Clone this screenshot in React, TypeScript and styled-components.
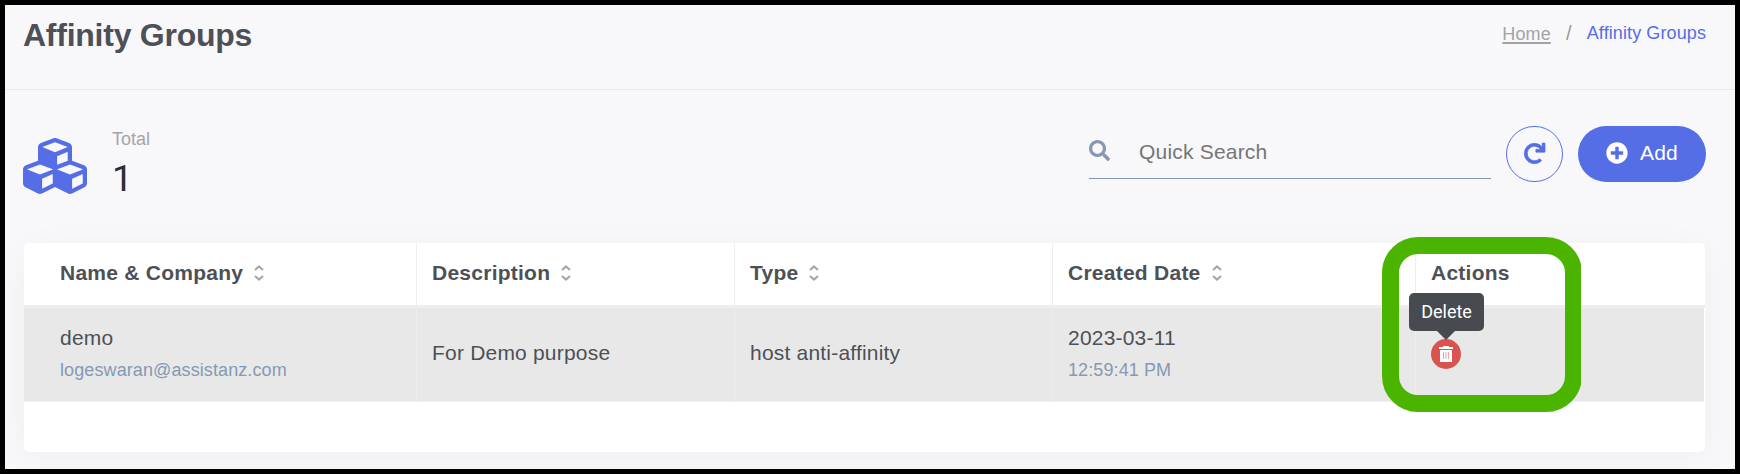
import React from "react";
import styled, { createGlobalStyle } from "styled-components";
import { FaCubes, FaSearch, FaRedo, FaPlusCircle } from "react-icons/fa";

const Global = createGlobalStyle`
  * { box-sizing: border-box; }
  body { margin: 0; font-family: "Liberation Sans", Arial, sans-serif; color: #4d5056; }
`;

const Frame = styled.div`
  height: 474px;
  border: 5px solid #000;
  background: #f8f8fb;
  overflow: hidden;
  position: relative;
`;

const Header = styled.header`
  height: 85px;
  padding: 12px 29px 0 18px;
  border-bottom: 1px solid #e9e9eb;
  display: flex;
  justify-content: space-between;
  align-items: flex-start;
`;

const Title = styled.h1`
  margin: 0;
  font-size: 32px;
  line-height: 37px;
  font-weight: 700;
  letter-spacing: -0.25px;
`;

const Breadcrumb = styled.nav`
  display: flex;
  font-size: 18px;
  line-height: 22px;
  padding-top: 5px;
  color: #999;
  letter-spacing: 0.1px;
`;

const HomeLink = styled.a`
  color: #a3a3a3;
  text-decoration: underline;
  text-underline-offset: 2px;
  text-decoration-thickness: 2px;
  padding-top: 1px;
`;

const Separator = styled.span`
  width: 36px;
  font-size: 20px;
  text-align: center;
`;

const Current = styled.span`
  color: #556ee6;
`;

const Toolbar = styled.section`
  height: 153px;
  padding: 36px 29px 0 18px;
  display: flex;
  align-items: flex-start;
`;

const Summary = styled.div`
  display: flex;
  flex: 1;
`;

const CubesIcon = styled(FaCubes)`
  width: 64px;
  height: 64px;
  margin-top: 8px;
  color: #556ee6;
`;

const Stat = styled.div`
  margin-left: 25px;
  padding-top: 3px;
`;

const StatLabel = styled.div`
  font-size: 18px;
  line-height: 20px;
  color: #a5a5a5;
`;

const StatValue = styled.div`
  font: 37px/40px Roboto, sans-serif;
  margin-top: 10px;
  color: #2a2e35;
`;

const Search = styled.label`
  width: 402px;
  height: 53px;
  border-bottom: 1px solid #8098b2;
  display: flex;
  align-items: flex-start;
  color: #8898b0;
`;

const SearchIcon = styled(FaSearch)`
  width: 21px;
  height: 21px;
  margin-top: 14px;
`;

const SearchInput = styled.input`
  margin: 12px 0 0 29px;
  padding: 0;
  border: 0;
  outline: 0;
  background: transparent;
  font: 21px/28px "Liberation Sans", Arial, sans-serif;
  letter-spacing: 0.2px;
  height: 28px;
  width: 300px;
  &::placeholder { color: #757575; opacity: 1; }
`;

const RoundButton = styled.button`
  width: 57px;
  height: 56px;
  margin-left: 15px;
  padding: 0 0 2px;
  border: 1px solid #556ee6;
  border-radius: 28px;
  background: transparent;
  color: #556ee6;
  display: flex;
  align-items: center;
  justify-content: center;
`;

const RefreshIcon = styled(FaRedo)`
  width: 21px;
  height: 21px;
  overflow: visible;
  stroke: currentColor;
  stroke-width: 16;
`;

const AddButton = styled.button`
  width: 128px;
  height: 56px;
  margin-left: 15px;
  padding: 0 0 2px;
  border: 0;
  border-radius: 28px;
  background: #556ee6;
  color: #fff;
  font: 21px "Liberation Sans", Arial, sans-serif;
  letter-spacing: 0.2px;
  display: flex;
  align-items: center;
  justify-content: center;
  gap: 12px;
`;

const Card = styled.section`
  width: 1681px;
  height: 209px;
  margin-left: 19px;
  background: #fff;
  border-radius: 5px;
  overflow: hidden;
  box-shadow: 0 6px 36px rgba(0, 0, 0, 0.04);
`;

const Row = styled.div<{ $head?: boolean }>`
  display: grid;
  grid-template-columns: 393px 318px 318px 363px 1fr;
  height: ${(p) => (p.$head ? 65 : 94)}px;
  margin-right: ${(p) => (p.$head ? 0 : 1)}px;
  border-bottom: ${(p) => (p.$head ? 3 : 1)}px solid #eee;
  background: ${(p) => (p.$head ? "#fff" : "#e8e8e8")};
  font-size: 21px;
  font-weight: ${(p) => (p.$head ? 700 : 400)};
  letter-spacing: ${(p) => (p.$head ? 0.25 : 0.2)}px;
`;

const Cell = styled.div`
  display: flex;
  flex-direction: column;
  justify-content: center;
  align-items: flex-start;
  padding: 0 0 3px 15px;
  border-right: 1px solid #eee;
  line-height: 28px;
  &:first-child { padding-left: 36px; }
  &:last-child { border-right: 0; }
`;

const HeadLabel = styled.div`
  display: flex;
  align-items: center;
  gap: 11px;
`;

const SubText = styled.div`
  font-size: 18px;
  line-height: 24px;
  margin-top: 6px;
  color: #8699b3;
  letter-spacing: 0.1px;
`;

const SortIcon = () => (
  <svg width="10" height="16" viewBox="0 0 10 16" fill="none" stroke="#a5a5a5" strokeWidth="2">
    <path d="M1 5 5 1.4 9 5M1 11 5 14.6 9 11" />
  </svg>
);

const DeleteButton = styled.button`
  position: relative;
  width: 30px;
  height: 30px;
  padding: 0;
  margin-top: 2px;
  border: 0;
  border-radius: 50%;
  background: #d9534f;
  display: flex;
  align-items: center;
  justify-content: center;
`;

const Tooltip = styled.span`
  position: absolute;
  left: -22px;
  bottom: 38px;
  width: 75px;
  height: 38px;
  border-radius: 5px;
  background: #474a4f;
  color: #fff;
  font: 18px/37px Roboto, sans-serif;
  letter-spacing: 0;
  text-align: center;
  &::after {
    content: "";
    position: absolute;
    left: 28px;
    top: 38px;
    border: 9px solid transparent;
    border-top-color: #474a4f;
    border-bottom: 0;
  }
`;

const Highlight = styled.div`
  position: absolute;
  left: 1377px;
  top: 232px;
  width: 200px;
  height: 175px;
  border: 17px solid #4bb400;
  border-radius: 36px;
  clip-path: inset(0 1px 0 0);
  pointer-events: none;
`;

const columns = [
  { label: "Name & Company", sortable: true },
  { label: "Description", sortable: true },
  { label: "Type", sortable: true },
  { label: "Created Date", sortable: true },
  { label: "Actions", sortable: false },
];

export default function App() {
  return (
    <Frame>
      <Global />
      <Header>
        <Title>Affinity Groups</Title>
        <Breadcrumb>
          <HomeLink>Home</HomeLink>
          <Separator>/</Separator>
          <Current>Affinity Groups</Current>
        </Breadcrumb>
      </Header>
      <Toolbar>
        <Summary>
          <CubesIcon />
          <Stat>
            <StatLabel>Total</StatLabel>
            <StatValue>1</StatValue>
          </Stat>
        </Summary>
        <Search>
          <SearchIcon />
          <SearchInput placeholder="Quick Search" />
        </Search>
        <RoundButton aria-label="Refresh"><RefreshIcon /></RoundButton>
        <AddButton><FaPlusCircle size={22} />Add</AddButton>
      </Toolbar>
      <Card>
        <Row $head>
          {columns.map((c) => (
            <Cell key={c.label}>
              <HeadLabel>{c.label}{c.sortable && <SortIcon />}</HeadLabel>
            </Cell>
          ))}
        </Row>
        <Row>
          <Cell>demo<SubText>logeswaran@assistanz.com</SubText></Cell>
          <Cell>For Demo purpose</Cell>
          <Cell>host anti-affinity</Cell>
          <Cell>2023-03-11<SubText>12:59:41 PM</SubText></Cell>
          <Cell>
            <DeleteButton aria-label="Delete">
              <svg width="14" height="16" viewBox="0 0 14 16" fill="#fff">
                <path d="M4.5 0h5l.7 1H14v2H0V1h3.8zM1 4h12v12H1z" />
                <path d="M4.5 6v7M7 6v7M9.5 6v7" stroke="#e9a5a0" />
              </svg>
              <Tooltip>Delete</Tooltip>
            </DeleteButton>
          </Cell>
        </Row>
      </Card>
      <Highlight />
    </Frame>
  );
}
